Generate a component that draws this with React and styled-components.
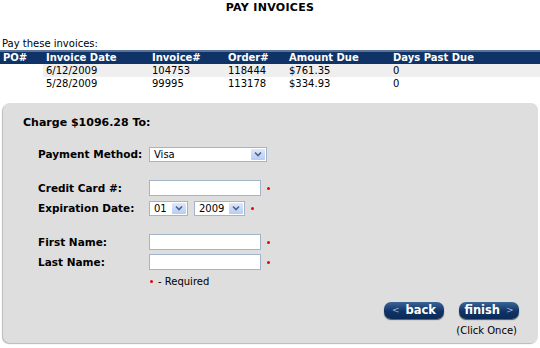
import styled, { createGlobalStyle } from "styled-components";

const Global = createGlobalStyle`
body {
  margin: 0;
  background: #fff;
  font-family: "DejaVu Sans", Verdana, sans-serif;
  font-size: 10px;
  color: #000;
}
`

const Page = styled.div`
width: 540px;
height: 348px;
overflow: hidden;
`

const Title = styled.h1`
margin: 0;
padding-top: 1px;
height: 37px;
text-align: center;
font-size: 11px;
font-weight: bold;
letter-spacing: 0.3px;
`

const Caption = styled.div`
padding-left: 2px;
height: 12px;
line-height: 12px;
`

const Table = styled.table`
width: 540px;
border-collapse: collapse;
table-layout: fixed;
th {
  background: #0f3366;
  color: #fff;
  text-align: left;
  font-weight: bold;
  height: 12px;
  padding: 0 0 0 3px;
  border-top: 2px solid #5a7398;
  line-height: 12px;
}
td {
  padding: 0 0 0 3px;
  height: 13px;
  line-height: 13px;
}
`

const Row = styled.tr`
td { background: ${p => p.$shade ? "#efefef" : "#fff"}; }
td:first-child { background: #fff; }
`

const Panel = styled.div`
margin: 13px 2px 0 3px;
height: 240px;
background: #dedede;
border-radius: 7px;
box-shadow: -1px 1px 1px #b8b8b8;
padding: 13px 0 0 20px;
box-sizing: border-box;
`

const Heading = styled.div`
font-weight: bold;
font-size: 11px;
margin-bottom: 17px;
`

const Form = styled.div`
display: grid;
grid-template-columns: 111px auto;
row-gap: 4px;
padding-left: 15px;
align-items: center;
`

const Label = styled.div`
font-weight: bold;
font-size: 10.5px;
height: 16px;
line-height: 16px;
`

const Field = styled.div`
display: flex;
align-items: center;
gap: 6px;
height: 16px;
`

const Spacer = styled.div`
grid-column: 1 / 3;
height: ${p => p.$h}px;
`

const Input = styled.div`
width: ${p => p.$w}px;
height: 14px;
background: #fff;
border: 1px solid #a3b3c8;
`

const Select = styled.div`
width: ${p => p.$w}px;
height: 13px;
background: #fff;
border: 1px solid #a3b3c8;
display: flex;
align-items: center;
justify-content: space-between;
padding-left: 4px;
line-height: 13px;
`

const Arrow = styled.div`
width: 14px;
height: 11px;
margin-right: 1px;
background: linear-gradient(#dde8fb, #b7ccf3);
border-radius: 1px;
display: flex;
align-items: center;
justify-content: center;
`

const Dot = styled.span`
width: 3px;
height: 3px;
border-radius: 50%;
background: #e00;
display: inline-block;
`

const Required = styled.div`
grid-column: 2;
display: flex;
align-items: center;
gap: 5px;
padding-left: 1px;
margin-top: 2px;
`

const Actions = styled.div`
display: flex;
flex-direction: column;
align-items: flex-end;
padding-right: 19px;
margin-top: 15px;
`

const Buttons = styled.div`
display: flex;
gap: 15px;
`

const Btn = styled.div`
width: 60px;
height: 17px;
border-radius: 7px;
background: linear-gradient(#3d6497, #0f3366 55%, #0b2a57);
box-shadow: 0 1px 1px #555;
color: #fff;
font-weight: bold;
font-size: 11.5px;
display: flex;
align-items: center;
justify-content: center;
gap: 6px;
line-height: 17px;
`

const Chev = styled.span`
font-size: 9px;
font-weight: normal;
color: #9fb4d6;
`

const Note = styled.div`
margin-top: 6px;
margin-right: 2px;
`

function ArrowIcon() {
  return (
    <Arrow>
      <svg width="8" height="6" viewBox="0 0 8 6">
        <path d="M1 1.5 L4 4.5 L7 1.5" stroke="#4d6185" strokeWidth="1.6" fill="none" />
      </svg>
    </Arrow>
  );
}

const invoices = [
  { date: "6/12/2009", inv: "104753", order: "118444", amt: "$761.35", days: "0" },
  { date: "5/28/2009", inv: "99995", order: "113178", amt: "$334.93", days: "0" },
];

export default function App() {
  return (
    <Page>
      <Global />
      <Title>PAY INVOICES</Title>
      <Caption>Pay these invoices:</Caption>
      <Table>
        <colgroup>
          <col style={{ width: 43 }} />
          <col style={{ width: 106 }} />
          <col style={{ width: 76 }} />
          <col style={{ width: 61 }} />
          <col style={{ width: 104 }} />
          <col />
        </colgroup>
        <thead>
          <tr>
            <th>PO#</th>
            <th>Invoice Date</th>
            <th>Invoice#</th>
            <th>Order#</th>
            <th>Amount Due</th>
            <th>Days Past Due</th>
          </tr>
        </thead>
        <tbody>
          {invoices.map((r, i) => (
            <Row key={r.inv} $shade={i === 0}>
              <td></td>
              <td>{r.date}</td>
              <td>{r.inv}</td>
              <td>{r.order}</td>
              <td>{r.amt}</td>
              <td>{r.days}</td>
            </Row>
          ))}
        </tbody>
      </Table>
      <Panel>
        <Heading>Charge $1096.28 To:</Heading>
        <Form>
          <Label>Payment Method:</Label>
          <Field><Select $w={112}>Visa<ArrowIcon /></Select></Field>
          <Spacer $h={10} />
          <Label>Credit Card #:</Label>
          <Field><Input $w={110} /><Dot /></Field>
          <Label>Expiration Date:</Label>
          <Field>
            <Select $w={33}>01<ArrowIcon /></Select>
            <Select $w={45}>2009<ArrowIcon /></Select>
            <Dot />
          </Field>
          <Spacer $h={10} />
          <Label>First Name:</Label>
          <Field><Input $w={110} /><Dot /></Field>
          <Label>Last Name:</Label>
          <Field><Input $w={110} /><Dot /></Field>
          <Required><Dot /><span>- Required</span></Required>
        </Form>
        <Actions>
          <Buttons>
            <Btn><Chev>&lt;</Chev>back</Btn>
            <Btn>finish<Chev>&gt;</Chev></Btn>
          </Buttons>
          <Note>(Click Once)</Note>
        </Actions>
      </Panel>
    </Page>
  );
}
